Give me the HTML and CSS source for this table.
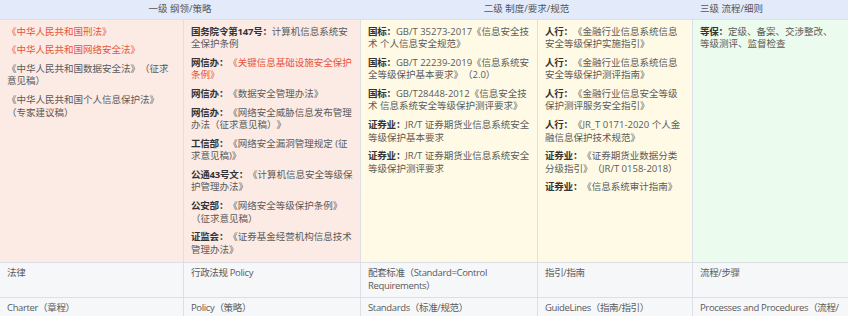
FILE: index.html
```html
<!DOCTYPE html>
<html lang="zh-CN">
<head>
<meta charset="utf-8">
<title>信息安全法规体系</title>
<link rel="stylesheet" href="styles.css">
</head>
<body>
<div class="sheet">
  <div class="head">
    <div class="h center">一级 纲领/策略</div>
    <div class="h center">二级 制度/要求/规范</div>
    <div class="h">三级 流程/细则</div>
  </div>

  <div class="cell pink">
    <p class="red">《中华人民共和国刑法》</p>
    <p class="red">《中华人民共和国网络安全法》</p>
    <p>《中华人民共和国数据安全法》（征求意见稿）</p>
    <p>《中华人民共和国个人信息保护法》（专家建议稿）</p>
  </div>
  <div class="cell pink">
    <p><b>国务院令第147号<span class="co">：</span></b>计算机信息系统安全保护条例</p>
    <p><b>网信办<span class="co">：</span></b><span class="red">《关键信息基础设施安全保护条例》</span></p>
    <p><b>网信办<span class="co">：</span></b>《数据安全管理办法》</p>
    <p><b>网信办<span class="co">：</span></b>《网络安全威胁信息发布管理办法（征求意见稿）》</p>
    <p><b>工信部<span class="co">：</span></b>《网络安全漏洞管理规定 (征求意见稿)》</p>
    <p><b>公通43号文<span class="co">：</span></b>《计算机信息安全等级保护管理办法》</p>
    <p><b>公安部<span class="co">：</span></b>《网络安全等级保护条例》（征求意见稿）</p>
    <p><b>证监会<span class="co">：</span></b>《证券基金经营机构信息技术管理办法》</p>
  </div>
  <div class="cell yellow">
    <p><b>国标<span class="co">：</span></b>GB/T 35273-2017《信息安全技术 个人信息安全规范》</p>
    <p><b>国标<span class="co">：</span></b>GB/T 22239-2019《信息系统安全等级保护基本要求》（2.0）</p>
    <p><b>国标<span class="co">：</span></b>GB/T28448-2012《信息安全技术 信息系统安全等级保护测评要求》</p>
    <p><b>证券业<span class="co">：</span></b>JR/T 证券期货业信息系统安全等级保护基本要求</p>
    <p><b>证券业<span class="co">：</span></b>JR/T 证券期货业信息系统安全等级保护测评要求</p>
  </div>
  <div class="cell yellow">
    <p><b>人行<span class="co">：</span></b>《金融行业信息系统信息安全等级保护实施指引》</p>
    <p><b>人行<span class="co">：</span></b>《金融行业信息系统信息安全等级保护测评指南》</p>
    <p><b>人行<span class="co">：</span></b>《金融行业信息安全等级保护测评服务安全指引》</p>
    <p><b>人行<span class="co">：</span></b>《JR_T 0171-2020 个人金融信息保护技术规范》</p>
    <p><b>证券业<span class="co">：</span></b>《证券期货业数据分类分级指引》（JR/T 0158-2018）</p>
    <p><b>证券业<span class="co">：</span></b>《信息系统审计指南》</p>
  </div>
  <div class="cell green">
    <p><b>等保<span class="co">：</span></b>定级、备案、交涉整改、等级测评、监督检查</p>
  </div>

  <div class="plain">法律</div>
  <div class="plain">行政法规 Policy</div>
  <div class="plain">配套标准（Standard=Control Requirements）</div>
  <div class="plain">指引/指南</div>
  <div class="plain">流程/步骤</div>

  <div class="plain">Charter（章程）</div>
  <div class="plain">Policy（策略）</div>
  <div class="plain">Standards（标准/规范）</div>
  <div class="plain">GuideLines（指南/指引）</div>
  <div class="plain">Processes and Procedures（流程/步骤）</div>
</div>
</body>
</html>
```

FILE: styles.css
```css
body {
  margin: 0;
  font-family: "Open Sans", "Noto Sans CJK SC", sans-serif;
  font-size: 9.5px;
  line-height: 12.5px;
  color: #5a5a5a;
  text-spacing-trim: space-all;
  text-autospace: no-autospace;
  background: #ffffff;
}

.sheet {
  display: grid;
  grid-template-columns: 183px 176px 176px 154px 155px;
  gap: 1px;
  width: 848px;
  background: #dcdfe6;
}

.head {
  grid-column: 1 / -1;
  display: grid;
  grid-template-columns: 360px 333px 155px;
  height: 19px;
  background: #e3eafa;
}

.h {
  padding: 3px 7px;
  color: #555555;
}

.center {
  text-align: center;
}

.cell {
  padding: 5.5px 6.5px 5.5px 7px;
}

.cell p {
  margin: 0 0 6.2px;
}

.cell p:last-child {
  margin-bottom: 0;
}

.pink {
  background: #fbebe4;
}

.yellow {
  background: #fffae6;
}

.green {
  background: #ebfbee;
}

.plain {
  padding: 4.5px 7px;
  background: #f6f7f9;
  letter-spacing: -0.35px;
}

b {
  font-weight: 700;
  color: #333333;
  letter-spacing: -0.2px;
}

.co {
  font-family: "Noto Sans CJK TC", sans-serif;
  line-height: 0;
}

.red {
  color: #e8533c;
}
```
